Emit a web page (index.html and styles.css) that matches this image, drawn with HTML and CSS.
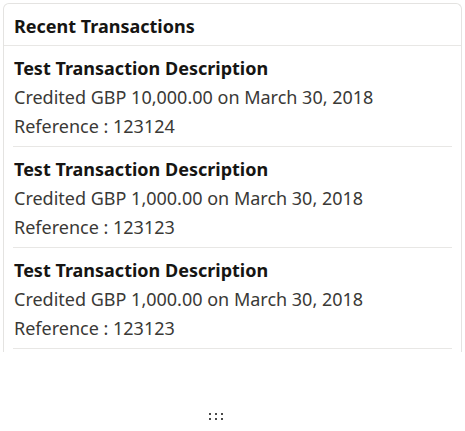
FILE: index.html
```html
<!DOCTYPE html>
<html>
<head>
<meta charset="utf-8">
<link rel="stylesheet" href="styles.css">
</head>
<body>
<div class="card">
  <div class="card-header">Recent Transactions</div>
  <ul class="list">
    <li class="item">
      <div class="title">Test Transaction Description</div>
      <div class="line">Credited GBP 10,000.00 on March 30, 2018</div>
      <div class="line">Reference : 123124</div>
    </li>
    <li class="item">
      <div class="title">Test Transaction Description</div>
      <div class="line">Credited GBP 1,000.00 on March 30, 2018</div>
      <div class="line">Reference : 123123</div>
    </li>
    <li class="item">
      <div class="title">Test Transaction Description</div>
      <div class="line">Credited GBP 1,000.00 on March 30, 2018</div>
      <div class="line">Reference : 123123</div>
    </li>
  </ul>
</div>
<div class="handle-row">
  <div class="handle">
    <span></span><span></span><span></span>
    <span></span><span></span><span></span>
  </div>
</div>
</body>
</html>
```

FILE: styles.css
```css
html, body {
  margin: 0;
  padding: 0;
  background: #ffffff;
}
body {
  font-family: "Noto Sans", "Open Sans", sans-serif;
  color: #3a3936;
  width: 465px;
  height: 431px;
  overflow: hidden;
}
.card {
  margin: 3px 3px 0 3px;
  width: 459px;
  box-sizing: border-box;
  border: 1px solid #e4e3e1;
  border-bottom: none;
  border-radius: 6px 6px 0 0;
}
.card-header {
  height: 42px;
  box-sizing: border-box;
  padding: 2px 10px 0 10px;
  display: flex;
  align-items: center;
  font-size: 18px;
  font-weight: 700;
  color: #161513;
  border-bottom: 1px solid #e8e7e5;
}
.list {
  list-style: none;
  margin: 0;
  padding: 0 9px 3px 9px;
}
.item {
  padding: 8px 1px 5px 1px;
  border-bottom: 1px solid #e8e7e5;
}
.title {
  font-size: 18px;
  font-weight: 700;
  line-height: 29px;
  color: #161513;
}
.line {
  font-size: 18px;
  line-height: 29px;
  color: #3a3936;
}
.handle-row {
  padding: 61px 0 0 209px;
}
.handle {
  display: grid;
  grid-template-columns: repeat(3, 2px);
  grid-auto-rows: 2px;
  column-gap: 4px;
  row-gap: 3px;
  width: 14px;
}
.handle span {
  background: #4a4a4a;
}
```
